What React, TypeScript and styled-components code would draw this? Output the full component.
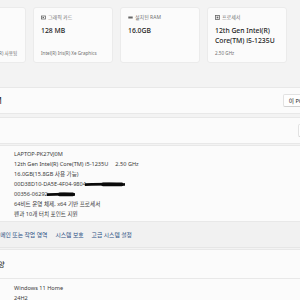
import styled, { createGlobalStyle } from 'styled-components'

const GlobalStyle = createGlobalStyle`
  html, body {
    margin: 0;
    padding: 0;
    background: #f3f3f3;
  }
  body {
    font-family: 'Noto Sans', 'Noto Sans CJK KR', sans-serif;
    color: #1b1b1b;
  }
`

const Page = styled.div`
  width: 300px;
  height: 300px;
  overflow: hidden;
  background: #f3f3f3;
`

const CardRow = styled.div`
  display: flex;
  gap: 7px;
  margin-left: -54px;
  padding-top: 7px;
`

const Card = styled.div`
  flex: 0 0 80px;
  height: 56px;
  box-sizing: border-box;
  padding: 6px 7px 5px;
  display: flex;
  flex-direction: column;
  background: #fbfbfb;
  border: 1px solid #ebebeb;
  border-radius: 3px;
`

const CardLabel = styled.div`
  display: flex;
  align-items: center;
  gap: 2px;
  font-size: 5px;
  line-height: 7px;
  color: #707070;
`

const CardValue = styled.div`
  margin-top: 5px;
  font-size: 6.8px;
  line-height: 10px;
  font-weight: 500;
  color: #1b1b1b;
`

const CardSub = styled.div<{ $indent?: number }>`
  margin-top: auto;
  margin-left: ${({ $indent = 0 }) => $indent}px;
  font-size: 4.6px;
  line-height: 7px;
  color: #707070;
  white-space: nowrap;
`

const Stack = styled.div`
  margin-top: 24px;
  margin-left: -90px;
  width: 460px;
  display: flex;
  flex-direction: column;
`

const Panel = styled.div<{ $height: number; $gap?: number; $pad?: number }>`
  height: ${({ $height }) => $height}px;
  margin-top: ${({ $gap = 0 }) => $gap}px;
  box-sizing: border-box;
  background: #fbfbfb;
  border: 1px solid #e8e8e8;
  display: flex;
  align-items: center;
  padding: 0 14px 0 ${({ $pad = 14 }) => $pad}px;
`

const PcName = styled.div`
  font-size: 8px;
  color: #1b1b1b;
`

const Title = styled.div`
  font-size: 7px;
  color: #1b1b1b;
`

const GhostButton = styled.div<{ $left: number }>`
  margin-left: ${({ $left }) => $left}px;
  height: 13px;
  box-sizing: border-box;
  padding: 0 5px;
  display: flex;
  align-items: center;
  font-size: 5.6px;
  color: #1b1b1b;
  background: #fefefe;
  border: 1px solid #e2e2e2;
  border-bottom-color: #d0d0d0;
  border-radius: 2px;
  white-space: nowrap;
`

const SpecBody = styled.div`
  margin-top: 1px;
  height: 77px;
  box-sizing: border-box;
  background: #fbfbfb;
  border: 1px solid #e8e8e8;
  padding: 3px 0 0 14px;
  display: grid;
  grid-template-columns: 89px 1fr;
  grid-auto-rows: 10px;
  align-items: center;
`

const SpecLabel = styled.div`
  font-size: 5.6px;
  color: #1b1b1b;
  white-space: nowrap;
`

const SpecValue = styled.div`
  display: flex;
  align-items: center;
  font-size: 5.6px;
  color: #3a3a3a;
  white-space: nowrap;
`

const Freq = styled.span`
  margin-left: 7px;
`

const LinksRow = styled.div`
  height: 25px;
  display: flex;
  align-items: center;
  gap: 8px;
  padding-left: 48px;
  background: #f1f1f1;
  border-bottom: 1px solid #e6e6e6;
`

const LinksLabel = styled.span`
  font-size: 5.8px;
  color: #1b1b1b;
  margin-right: 6px;
`

const Link = styled.span`
  font-size: 5.8px;
  color: #2a4f82;
  white-space: nowrap;
`

const WinBody = styled.div`
  height: 40px;
  box-sizing: border-box;
  background: #fbfbfb;
  border: 1px solid #e8e8e8;
  border-top: none;
  padding: 4px 0 0 103px;
  display: flex;
  flex-direction: column;
`

const WinLine = styled.div`
  height: 10px;
  display: flex;
  align-items: center;
  font-size: 5.6px;
  color: #3a3a3a;
`

const Scribble = ({ width }: { width: number }) => (
  <svg width={width} height={7} viewBox={`0 0 ${width} 7`} style={{ marginLeft: -1 }}>
    <path
      d={`M0 3.6 C${width * 0.3} 3.2 ${width * 0.55} 3 ${width * 0.8} 3.2 S${width - 2} 3.6 ${width} 3.4`}
      stroke="#0a0a0a"
      strokeWidth={2.6}
      strokeLinecap="round"
      fill="none"
    />
    <path
      d={`M${width * 0.45} 3.4 L${width * 0.92} 3.4`}
      stroke="#0a0a0a"
      strokeWidth={3.6}
      strokeLinecap="round"
    />
  </svg>
)

const GpuIcon = () => (
  <svg width={5} height={5} viewBox="0 0 5 5">
    <rect x={0.5} y={1} width={4} height={3} fill="none" stroke="#666" strokeWidth={0.8} />
    <rect x={1.5} y={2} width={1.5} height={1} fill="#666" />
  </svg>
)

const RamIcon = () => (
  <svg width={5} height={5} viewBox="0 0 5 5">
    <rect x={0.3} y={1.5} width={4.4} height={2} fill="#666" />
  </svg>
)

const CpuIcon = () => (
  <svg width={5} height={5} viewBox="0 0 5 5">
    <rect x={0.5} y={0.5} width={4} height={4} fill="none" stroke="#666" strokeWidth={0.8} />
    <rect x={1.6} y={1.6} width={1.8} height={1.8} fill="#666" />
  </svg>
)

const DiskIcon = () => (
  <svg width={5} height={5} viewBox="0 0 5 5">
    <rect x={0.5} y={1} width={4} height={3} rx={0.5} fill="none" stroke="#666" strokeWidth={0.8} />
  </svg>
)

const specs: { label: string; value: React.ReactNode }[] = [
  { label: '디바이스 이름', value: 'LAPTOP-PK27VJ0M' },
  {
    label: '프로세서',
    value: (
      <>
        12th Gen Intel(R) Core(TM) i5-1235U <Freq>2.50 GHz</Freq>
      </>
    ),
  },
  { label: '설치된 RAM', value: '16.0GB(15.8GB 사용 가능)' },
  {
    label: '디바이스 ID',
    value: (
      <>
        00D38D10-DA5E-4F04-9804
        <Scribble width={40} />
      </>
    ),
  },
  {
    label: '제품 ID',
    value: (
      <>
        00356-06292
        <Scribble width={28} />
      </>
    ),
  },
  { label: '시스템 종류', value: '64비트 운영 체제, x64 기반 프로세서' },
  { label: '펜 및 터치', value: '펜과 10개 터치 포인트 지원' },
]

export default function App() {
  return (
    <Page>
      <GlobalStyle />
      <CardRow>
        <Card>
          <CardLabel>
            <DiskIcon />
            저장소
          </CardLabel>
          <CardValue>477 GB</CardValue>
          <CardSub $indent={-6}>476 GB 중 154 GB, Intel(R) 사용됨</CardSub>
        </Card>
        <Card>
          <CardLabel>
            <GpuIcon />
            그래픽 카드
          </CardLabel>
          <CardValue>128 MB</CardValue>
          <CardSub>Intel(R) Iris(R) Xe Graphics</CardSub>
        </Card>
        <Card>
          <CardLabel>
            <RamIcon />
            설치된 RAM
          </CardLabel>
          <CardValue>16.0GB</CardValue>
        </Card>
        <Card>
          <CardLabel>
            <CpuIcon />
            프로세서
          </CardLabel>
          <CardValue>
            12th Gen Intel(R)
            <br />
            Core(TM) i5-1235U
          </CardValue>
          <CardSub>2.50 GHz</CardSub>
        </Card>
      </CardRow>

      <Stack>
        <Panel $height={27} $pad={21}>
          <PcName>LAPTOP-PK27VJ0M</PcName>
          <GhostButton $left={281}>이 PC 이름 바꾸기</GhostButton>
        </Panel>
        <Panel $height={27} $gap={3}>
          <Title>디바이스 사양</Title>
          <GhostButton $left={333}>복사</GhostButton>
        </Panel>
        <SpecBody>
          {specs.map((s) => (
            <>
              <SpecLabel key={s.label + '-l'}>{s.label}</SpecLabel>
              <SpecValue key={s.label + '-v'}>{s.value}</SpecValue>
            </>
          ))}
        </SpecBody>
        <LinksRow>
          <LinksLabel>관련 링크</LinksLabel>
          <Link>도메인 또는 작업 영역</Link>
          <Link>시스템 보호</Link>
          <Link>고급 시스템 설정</Link>
        </LinksRow>
        <Panel $height={30} $gap={1} $pad={49}>
          <Title>Windows 사양</Title>
        </Panel>
        <WinBody>
          <WinLine>Windows 11 Home</WinLine>
          <WinLine>24H2</WinLine>
        </WinBody>
      </Stack>
    </Page>
  )
}
